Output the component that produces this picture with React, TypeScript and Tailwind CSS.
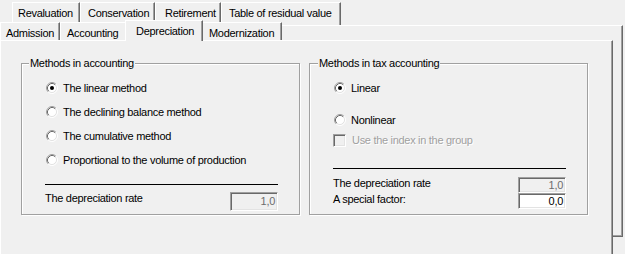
import React from "react";

function Radio({ checked }: { checked?: boolean }) {
  return (
    <svg width="12" height="12" viewBox="0 0 12 12" className="block shrink-0">
      <circle cx="6" cy="6" r="4.5" fill="#ffffff" />
      <path d="M2.11 9.89 A5.5 5.5 0 0 1 9.89 2.11" fill="none" stroke="#a0a0a0" strokeWidth="1" />
      <path d="M9.89 2.11 A5.5 5.5 0 0 1 2.11 9.89" fill="none" stroke="#ffffff" strokeWidth="1" />
      <path d="M2.82 9.18 A4.5 4.5 0 0 1 9.18 2.82" fill="none" stroke="#696969" strokeWidth="1" />
      <path d="M9.18 2.82 A4.5 4.5 0 0 1 2.82 9.18" fill="none" stroke="#e3e3e3" strokeWidth="1" />
      {checked && <circle cx="6" cy="6" r="2" fill="#000000" />}
    </svg>
  );
}

function TextBox({ value, disabled, h }: { value: string; disabled?: boolean; h: string }) {
  return (
    <div
      className={
        "box-border w-[48px] flex items-center justify-end pr-[2px] border border-t-[#a0a0a0] border-l-[#a0a0a0] border-b-white border-r-white shadow-[inset_1px_1px_0_#696969,inset_-1px_-1px_0_#e3e3e3] " +
        h +
        (disabled ? " bg-[#f0f0f0] text-[#6d6d6d]" : " bg-white text-black")
      }
    >
      {value}
    </div>
  );
}

function Tab({ label, cls }: { label: string; cls: string }) {
  return (
    <div
      className={
        "box-border shrink-0 whitespace-nowrap bg-[#f0f0f0] border-l border-t border-r border-l-white border-t-white border-r-[#696969] shadow-[inset_-1px_0_0_#a0a0a0] pt-[4px] " +
        cls
      }
    >
      {label}
    </div>
  );
}

export default function App() {
  return (
    <div className="w-[625px] h-[254px] overflow-hidden bg-[#f0f0f0] text-black font-['Liberation_Sans',Arial,sans-serif] text-[11px] leading-[13px] tracking-[-0.3px]">
      {/* back row of tabs */}
      <div className="flex items-start h-[20px] mt-[2px] pl-[12px]">
        <Tab label="Revaluation" cls="w-[68px] h-[20px] pl-[5px]" />
        <Tab label="Conservation" cls="w-[75px] h-[20px] pl-[7px]" />
        <Tab label="Retirement" cls="w-[66px] h-[20px] pl-[9px]" />
        <Tab label="Table of residual value" cls="w-[120px] h-[23px] pl-[7px]" />
      </div>

      {/* stacked page frame */}
      <div className="mt-[3px] w-[623px] h-[212px] box-border border-t border-r border-b border-t-white border-r-[#696969] border-b-[#696969] shadow-[inset_-1px_-1px_0_#a0a0a0]">
        {/* front row of tabs */}
        <div className="flex items-start h-[18px] -mt-[4px]">
          <Tab label="Admission" cls="w-[60px] h-[18px] pl-[5px]" />
          <Tab label="Accounting" cls="w-[67px] h-[18px] pl-[6px]" />
          <Tab label="Depreciation" cls="relative z-10 w-[78px] h-[21px] -mt-[2px] -mx-[2px] pl-[10px] shadow-[inset_-1px_0_0_#a0a0a0]" />
          <Tab label="Modernization" cls="w-[81px] h-[18px] pl-[7px]" />
        </div>

        {/* page */}
        <div className="w-[613px] h-[214px] box-border bg-[#f0f0f0] border-l border-t border-r border-l-white border-t-white border-r-[#696969] shadow-[inset_-1px_0_0_#a0a0a0] pt-[22px] pl-[20px] flex items-start gap-[9px]">
          {/* group 1 */}
          <div className="w-[279px] h-[152px] box-border border border-[#a0a0a0] shadow-[inset_1px_1px_0_#fff,1px_1px_0_#fff] flex flex-col">
            <div className="self-start ml-[7px] -mt-[7px] px-[1px] bg-[#f0f0f0]">Methods in accounting</div>
            <div className="mt-[6px] ml-[24px] flex flex-col">
              <div className="h-[24px] flex items-center gap-[5px]">
                <Radio checked />
                <span>The linear method</span>
              </div>
              <div className="h-[24px] flex items-center gap-[5px]">
                <Radio />
                <span>The declining balance method</span>
              </div>
              <div className="h-[24px] flex items-center gap-[5px]">
                <Radio />
                <span>The cumulative method</span>
              </div>
              <div className="h-[24px] flex items-center gap-[5px]">
                <Radio />
                <span>Proportional to the volume of production</span>
              </div>
            </div>
            <div className="mt-[12px] ml-[23px] w-[233px] h-[1px] bg-black" />
            <div className="mt-[7px] ml-[23px] w-[233px] flex items-start justify-between">
              <span>The depreciation rate</span>
              <TextBox value="1,0" disabled h="h-[19px]" />
            </div>
          </div>

          {/* group 2 */}
          <div className="w-[279px] h-[152px] box-border border border-[#a0a0a0] shadow-[inset_1px_1px_0_#fff,1px_1px_0_#fff] flex flex-col">
            <div className="self-start ml-[8px] -mt-[7px] px-[1px] bg-[#f0f0f0]">Methods in tax accounting</div>
            <div className="mt-[10px] ml-[24px] h-[16px] flex items-center gap-[5px]">
              <Radio checked />
              <span>Linear</span>
            </div>
            <div className="mt-[16px] ml-[24px] h-[16px] flex items-center gap-[5px]">
              <Radio />
              <span>Nonlinear</span>
            </div>
            <div className="mt-[4px] ml-[23px] h-[16px] flex items-center gap-[6px]">
              <div className="w-[13px] h-[13px] shrink-0 box-border border border-t-[#a0a0a0] border-l-[#a0a0a0] border-b-white border-r-white shadow-[inset_1px_1px_0_#696969,inset_-1px_-1px_0_#e3e3e3] bg-[#f0f0f0]" />
              <span className="text-[#a0a0a0] [text-shadow:1px_1px_0_#ffffff]">Use the index in the group</span>
            </div>
            <div className="mt-[20px] ml-[23px] w-[233px] h-[1px] bg-black" />
            <div className="mt-[8px] ml-[23px] w-[233px] flex items-start justify-between">
              <span>The depreciation rate</span>
              <TextBox value="1,0" disabled h="h-[16px]" />
            </div>
            <div className="ml-[23px] w-[233px] flex items-start justify-between">
              <span>A special factor:</span>
              <TextBox value="0,0" h="h-[16px]" />
            </div>
          </div>
        </div>
      </div>
    </div>
  );
}
